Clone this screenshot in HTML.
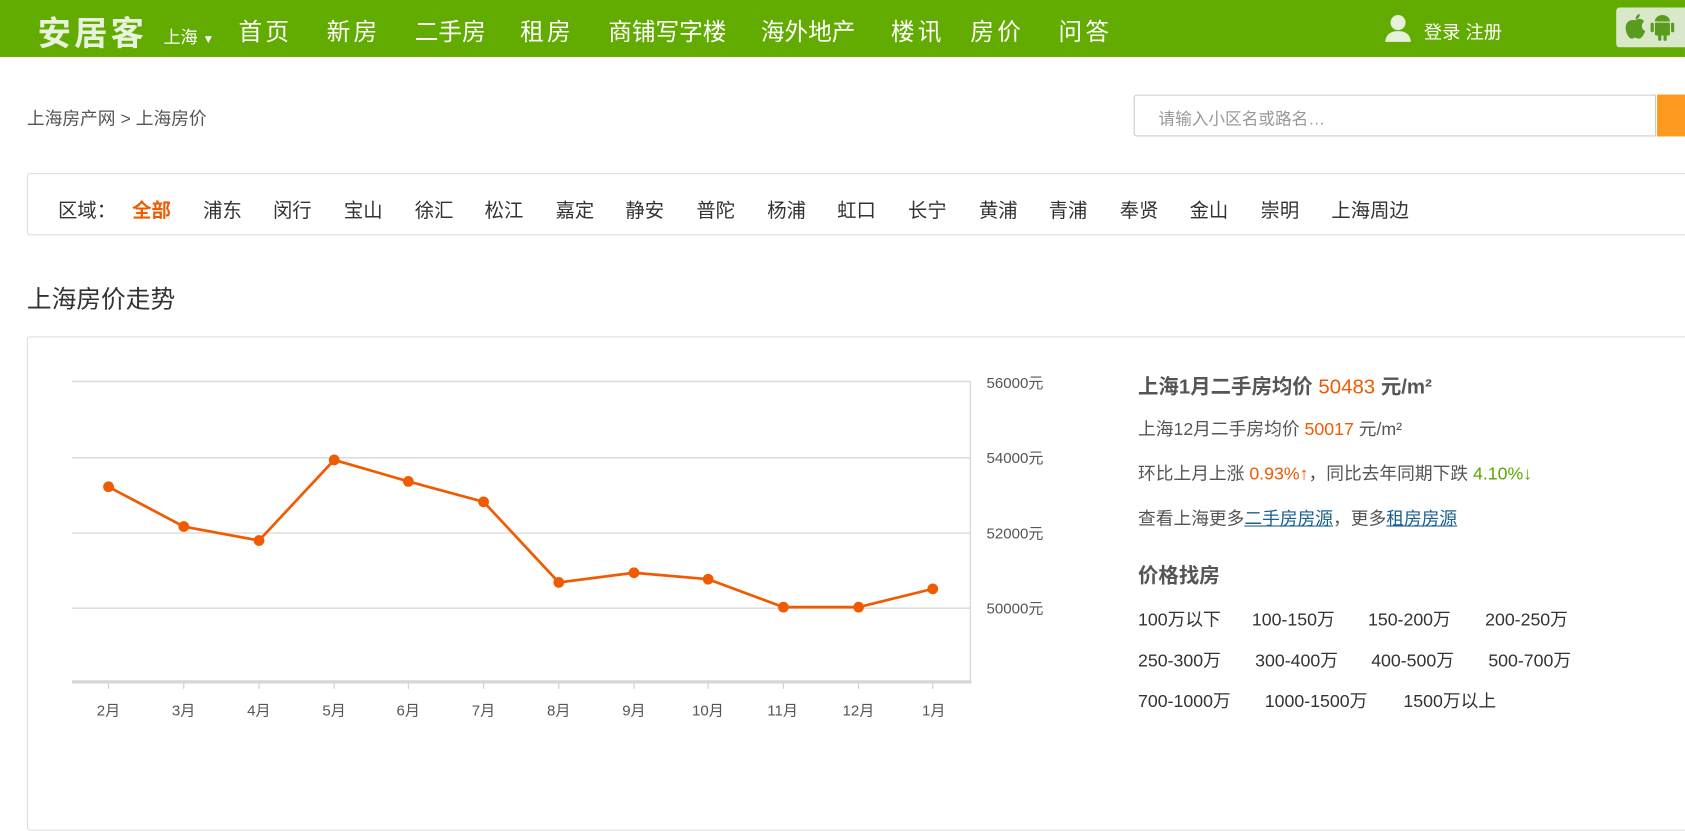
<!DOCTYPE html>
<html><head><meta charset="utf-8"><style>
html,body{margin:0;padding:0;background:#fff;overflow:hidden;width:1685px;height:754px}
#w{position:absolute;left:0;top:0;width:1568px;height:702px;transform:scale(1.0746);transform-origin:0 0;font-family:"Liberation Sans","Microsoft YaHei","Noto Sans CJK SC",sans-serif;color:#333}
.a{position:absolute;white-space:nowrap}
.hd{position:absolute;left:0;top:0;width:1568px;height:53px;background:#62ab00}
.nav{color:#fff;font-size:22px;top:12px;letter-spacing:3px}
.ar{font-size:18px;top:182px;color:#333}
.xl{font-size:14px;color:#555;top:651px}
.yl{font-size:14px;color:#555;left:918px}
.r{left:1059px;font-size:16.5px;color:#555}
.o{color:#f05a00}
.g{color:#5aa700}
a{color:#1a5f8e;text-decoration:underline}
</style></head><body><div id="w">
<div class="hd"></div>
<div class="a" style="left:35px;top:6px;font-size:31px;font-weight:bold;color:#e8f2dc;letter-spacing:3px">安居客</div>
<div class="a" style="left:152px;top:21px;font-size:16px;color:#fff">上海 <span style="font-size:11px">▼</span></div>
<div class="a nav" style="left:222px">首页</div>
<div class="a nav" style="left:304px">新房</div>
<div class="a nav" style="left:386px;letter-spacing:0">二手房</div>
<div class="a nav" style="left:484px">租房</div>
<div class="a nav" style="left:566px;letter-spacing:0">商铺写字楼</div>
<div class="a nav" style="left:708px;letter-spacing:0">海外地产</div>
<div class="a nav" style="left:829px">楼讯</div>
<div class="a nav" style="left:903px">房价</div>
<div class="a nav" style="left:985px">问答</div>
<svg class="a" style="left:1288px;top:13px" width="26" height="27" viewBox="0 0 26 27"><circle cx="13" cy="8" r="7" fill="#e6f0da"/><path d="M1 26 Q2 16 13 16 Q24 16 25 26Z" fill="#e6f0da"/></svg>
<div class="a" style="left:1325px;top:16px;font-size:17px;color:#fff">登录 注册</div>
<div class="a" style="left:1504px;top:7px;width:70px;height:37px;background:#d8e8c8;border-radius:3px"></div>
<svg class="a" style="left:1511px;top:12px" width="22" height="26" viewBox="0 0 22 26"><path d="M11 7 C13 5 17 5 19 8 C16 10 16 15 20 17 C18 22 16 24 14 24 C12 24 12 23 11 23 C10 23 9 24 7 24 C4 23 1 17 2 12 C3 7 8 6 11 7Z" fill="#5a9a1e"/><path d="M11 6 C11 3 13 1 15 1 C15 4 13 6 11 6Z" fill="#5a9a1e"/></svg>
<svg class="a" style="left:1535px;top:13px" width="24" height="26" viewBox="0 0 24 26"><rect x="5" y="8" width="14" height="12" rx="1" fill="#5a9a1e"/><path d="M5 7 A7 6 0 0 1 19 7Z" fill="#5a9a1e"/><rect x="1" y="8" width="3" height="9" rx="1.5" fill="#5a9a1e"/><rect x="20" y="8" width="3" height="9" rx="1.5" fill="#5a9a1e"/><rect x="8" y="19" width="3" height="6" rx="1.5" fill="#5a9a1e"/><rect x="13" y="19" width="3" height="6" rx="1.5" fill="#5a9a1e"/></svg>

<div class="a" style="left:25px;top:97px;font-size:16.5px;color:#555">上海房产网 &gt; 上海房价</div>
<div class="a" style="left:1055px;top:88px;width:486px;height:39px;border:1px solid #ccc;border-radius:3px 0 0 3px;box-sizing:border-box"></div>
<div class="a" style="left:1078px;top:99px;font-size:15.5px;color:#999">请输入小区名或路名…</div>
<div class="a" style="left:1542px;top:88px;width:40px;height:39px;background:#ff9a1e"></div>

<div class="a" style="left:25px;top:161px;width:1560px;height:58px;border:1px solid #ddd;border-radius:3px;box-sizing:border-box"></div>
<div class="a ar" style="left:54px">区域：</div>
<div class="a ar" style="left:123px;color:#f05a00;font-weight:bold">全部</div>
<div class="a ar" style="left:189px">浦东</div><div class="a ar" style="left:254px">闵行</div><div class="a ar" style="left:320px">宝山</div><div class="a ar" style="left:386px">徐汇</div><div class="a ar" style="left:451px">松江</div><div class="a ar" style="left:517px">嘉定</div><div class="a ar" style="left:582px">静安</div><div class="a ar" style="left:648px">普陀</div><div class="a ar" style="left:714px">杨浦</div><div class="a ar" style="left:779px">虹口</div><div class="a ar" style="left:845px">长宁</div><div class="a ar" style="left:911px">黄浦</div><div class="a ar" style="left:976px">青浦</div><div class="a ar" style="left:1042px">奉贤</div><div class="a ar" style="left:1107px">金山</div><div class="a ar" style="left:1173px">崇明</div><div class="a ar" style="left:1239px">上海周边</div>

<div class="a" style="left:25px;top:259px;font-size:23px;color:#333">上海房价走势</div>
<div class="a" style="left:25px;top:313px;width:1560px;height:460px;border:1px solid #ddd;border-radius:3px;box-sizing:border-box"></div>

<svg class="a" style="left:0;top:0" width="1000" height="702">
<g stroke="#ddd" stroke-width="1.5">
<line x1="67" y1="355" x2="903" y2="355"/><line x1="67" y1="426" x2="903" y2="426"/><line x1="67" y1="496" x2="903" y2="496"/><line x1="67" y1="566" x2="903" y2="566"/>
<line x1="903" y1="355" x2="903" y2="635"/>
</g>
<line x1="67" y1="634.5" x2="904" y2="634.5" stroke="#d6d6d6" stroke-width="3"/>
<g stroke="#ccc"><line x1="101" y1="636" x2="101" y2="641"/><line x1="171" y1="636" x2="171" y2="641"/><line x1="241" y1="636" x2="241" y2="641"/><line x1="311" y1="636" x2="311" y2="641"/><line x1="380" y1="636" x2="380" y2="641"/><line x1="450" y1="636" x2="450" y2="641"/><line x1="520" y1="636" x2="520" y2="641"/><line x1="590" y1="636" x2="590" y2="641"/><line x1="659" y1="636" x2="659" y2="641"/><line x1="729" y1="636" x2="729" y2="641"/><line x1="799" y1="636" x2="799" y2="641"/><line x1="868" y1="636" x2="868" y2="641"/></g>
<polyline fill="none" stroke="#f05a00" stroke-width="2.5" points="101,453 171,490 241,503 311,428 380,448 450,467 520,542 590,533 659,539 729,565 799,565 868,548"/>
<g fill="#f05a00"><circle cx="101" cy="453" r="5"/><circle cx="171" cy="490" r="5"/><circle cx="241" cy="503" r="5"/><circle cx="311" cy="428" r="5"/><circle cx="380" cy="448" r="5"/><circle cx="450" cy="467" r="5"/><circle cx="520" cy="542" r="5"/><circle cx="590" cy="533" r="5"/><circle cx="659" cy="539" r="5"/><circle cx="729" cy="565" r="5"/><circle cx="799" cy="565" r="5"/><circle cx="868" cy="548" r="5"/></g>
</svg>
<div class="a yl" style="top:346px">56000元</div><div class="a yl" style="top:416px">54000元</div><div class="a yl" style="top:486px">52000元</div><div class="a yl" style="top:556px">50000元</div>
<div class="a xl" style="left:90px">2月</div><div class="a xl" style="left:160px">3月</div><div class="a xl" style="left:230px">4月</div><div class="a xl" style="left:300px">5月</div><div class="a xl" style="left:369px">6月</div><div class="a xl" style="left:439px">7月</div><div class="a xl" style="left:509px">8月</div><div class="a xl" style="left:579px">9月</div><div class="a xl" style="left:644px">10月</div><div class="a xl" style="left:714px">11月</div><div class="a xl" style="left:784px">12月</div><div class="a xl" style="left:858px">1月</div>

<div class="a r" style="top:345px;font-size:19px;font-weight:bold;color:#555">上海1月二手房均价 <span class="o" style="font-weight:normal">50483</span> 元/m²</div>
<div class="a r" style="top:386px">上海12月二手房均价 <span class="o">50017</span> 元/m²</div>
<div class="a r" style="top:427px">环比上月上涨 <span class="o">0.93%↑</span>，同比去年同期下跌 <span class="g">4.10%↓</span></div>
<div class="a r" style="top:469px">查看上海更多<a>二手房房源</a>，更多<a>租房房源</a></div>
<div class="a r" style="top:521px;font-size:19px;font-weight:bold">价格找房</div>
<div class="a r" style="top:563px;color:#333">100万以下</div><div class="a r" style="top:563px;left:1165px;color:#333">100-150万</div><div class="a r" style="top:563px;left:1273px;color:#333">150-200万</div><div class="a r" style="top:563px;left:1382px;color:#333">200-250万</div>
<div class="a r" style="top:601px;color:#333">250-300万</div><div class="a r" style="top:601px;left:1168px;color:#333">300-400万</div><div class="a r" style="top:601px;left:1276px;color:#333">400-500万</div><div class="a r" style="top:601px;left:1385px;color:#333">500-700万</div>
<div class="a r" style="top:639px;color:#333">700-1000万</div><div class="a r" style="top:639px;left:1177px;color:#333">1000-1500万</div><div class="a r" style="top:639px;left:1306px;color:#333">1500万以上</div>
</div></body></html>
